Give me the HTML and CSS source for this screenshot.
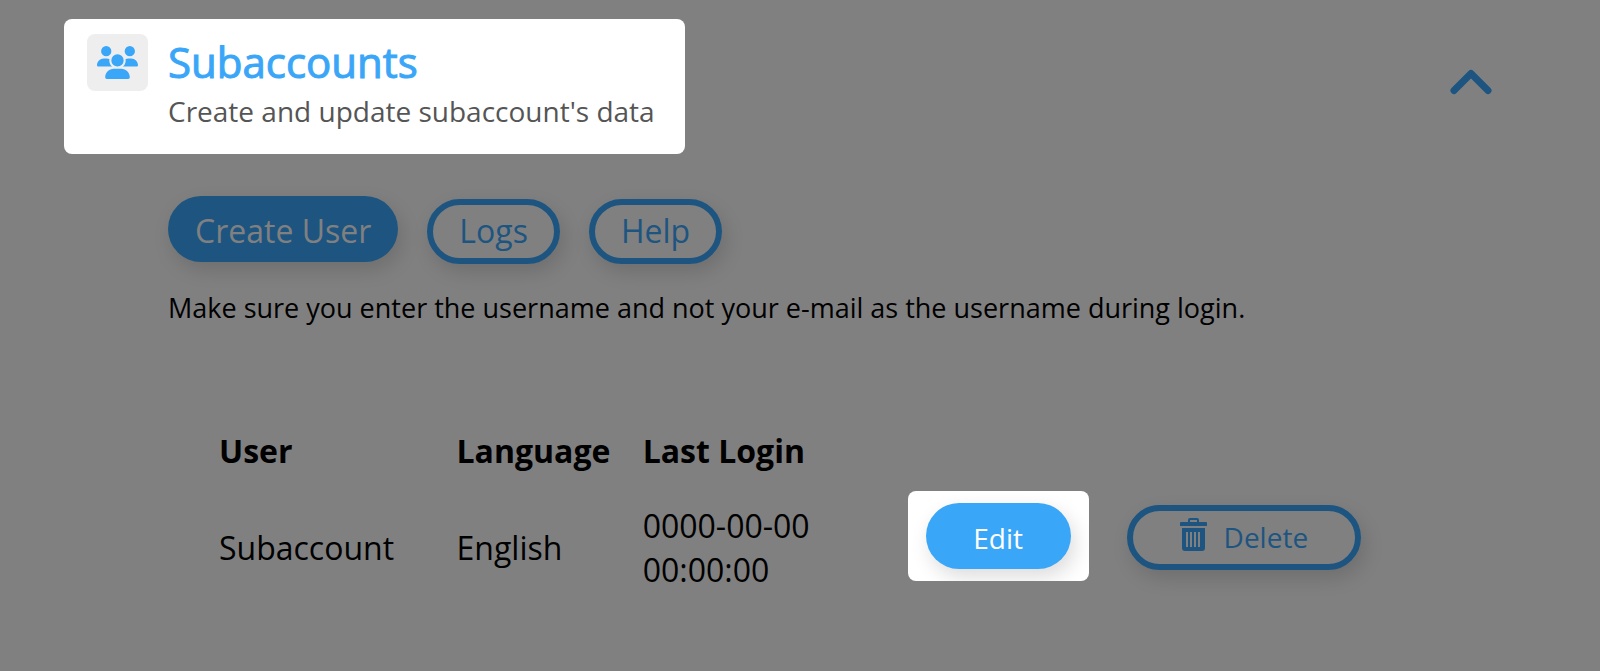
FILE: index.html
```html
<!DOCTYPE html>
<html lang="en">
<head>
<meta charset="utf-8">
<title>Subaccounts</title>
<link rel="stylesheet" href="styles.css">
</head>
<body>
<main class="panel">
  <header class="panel-header">
    <div class="intro">
      <span class="intro-icon">
        <svg viewBox="0 0 640 512" width="41" height="33" aria-hidden="true"><path fill="currentColor" d="M144 0a80 80 0 1 1 0 160A80 80 0 1 1 144 0zM512 0a80 80 0 1 1 0 160A80 80 0 1 1 512 0zM0 298.700C0 239.800 47.800 192 106.700 192h42.700c15.900 0 31 3.500 44.600 9.700c-1.300 7.200-1.900 14.700-1.900 22.300c0 38.200 16.800 72.500 43.300 96H21.300C9.600 320 0 310.400 0 298.700zM405.300 320h-.7c26.600-23.500 43.300-57.800 43.300-96c0-7.600-.7-15-1.900-22.300c13.600-6.300 28.700-9.700 44.600-9.700h42.700C592.200 192 640 239.800 640 298.700c0 11.800-9.600 21.300-21.300 21.300H405.300zM224 224a96 96 0 1 1 192 0a96 96 0 1 1-192 0zM128 485.300C128 411.700 187.700 352 261.300 352h117.400C452.300 352 512 411.700 512 485.300c0 14.700-11.900 26.700-26.700 26.700H154.700c-14.700 0-26.700-11.900-26.700-26.700z"/></svg>
      </span>
      <div class="intro-text">
        <h1 class="title">Subaccounts</h1>
        <p class="subtitle">Create and update subaccount's data</p>
      </div>
    </div>
    <button class="collapse" type="button" aria-label="Collapse" aria-expanded="true">
      <svg viewBox="0 0 42 26" width="42" height="26" aria-hidden="true"><path d="M4 21.500 21 4.500 38 21.500" fill="none" stroke="currentColor" stroke-width="7" stroke-linecap="round" stroke-linejoin="round"/></svg>
    </button>
  </header>
  <section class="content">
    <div class="actions">
      <button class="btn btn-filled btn-dim" type="button">Create User</button>
      <button class="btn btn-outline" type="button">Logs</button>
      <button class="btn btn-outline" type="button">Help</button>
    </div>
    <p class="note">Make sure you enter the username and not your e-mail as the username during login.</p>
    <table class="users">
      <colgroup>
        <col class="col-user"><col class="col-language"><col class="col-login"><col class="col-edit"><col class="col-delete">
      </colgroup>
      <thead>
        <tr><th scope="col">User</th><th scope="col">Language</th><th scope="col">Last Login</th><td></td><td></td></tr>
      </thead>
      <tbody>
        <tr>
          <td>Subaccount</td>
          <td>English</td>
          <td>0000-00-00 00:00:00</td>
          <td class="action"><div class="spotlight"><button class="btn btn-filled btn-edit" type="button">Edit</button></div></td>
          <td class="action">
            <button class="btn btn-outline btn-delete" type="button">
              <svg class="trash" viewBox="0 0 27 33" width="27" height="33" aria-hidden="true"><path fill="currentColor" fill-rule="evenodd" d="M8 4V2q0-2 2-2h7q2 0 2 2v2h7q1 0 1 1v3H0V5q0-1 1-1zM10 2v2h7V2zM2 10h23v20q0 3-3 3H5q-3 0-3-3zM6 14v15h2V14zM10 14v15h2V14zM14 14v15h2V14zM18 14v15h2V14z"/></svg>
              Delete
            </button>
          </td>
        </tr>
      </tbody>
    </table>
  </section>
</main>
</body>
</html>
```
FILE: styles.css
```css
* { box-sizing: border-box; }

body {
  margin: 0;
  background: #808080;
  color: #000;
  font-family: "Open Sans", "Noto Sans", sans-serif;
}

.panel { padding: 19px 108px 40px 64px; }

.panel-header {
  display: flex;
  justify-content: space-between;
  align-items: center;
}

.intro {
  display: flex;
  align-items: flex-start;
  gap: 20px;
  padding: 15px 30px 22px 23px;
  border-radius: 8px;
  background: #fff;
}

.intro-icon {
  display: flex;
  align-items: center;
  justify-content: center;
  width: 61px;
  height: 57px;
  border-radius: 8px;
  background: #eee;
  color: #3aa6f8;
}

.title {
  margin: 0;
  color: #3aa6f8;
  font-size: 42px;
  font-weight: 500;
  line-height: 56px;
  -webkit-text-stroke: 1px #3aa6f8;
}

.subtitle {
  margin: 0;
  color: #555;
  font-size: 28px;
  line-height: 42px;
}

.collapse {
  display: flex;
  margin-bottom: 10px;
  padding: 0;
  border: 0;
  background: none;
  color: #1d5580;
}

.content { padding: 42px 0 0 104px; }

.actions {
  display: flex;
  align-items: flex-start;
  gap: 29px;
}

.btn {
  border: 0;
  border-radius: 33px;
  font-family: inherit;
  font-size: 32px;
  line-height: 44px;
  box-shadow: 4px 8px 20px rgba(0, 0, 0, 0.14);
}

.btn-filled {
  height: 66px;
  padding: 4px 27px 0;
  background: #3aa6f8;
  color: #fff;
}

.btn-dim {
  background: #1d5580;
  color: #808080;
}

.btn-outline {
  height: 65px;
  margin-top: 3px;
  padding: 0 26px 2px;
  border: 6px solid #1d5580;
  background: transparent;
  color: #1d5580;
}

.note {
  margin: 24px 0 0;
  font-size: 27px;
  line-height: 40px;
}

.users {
  width: calc(100% - 182px);
  margin: 100px 0 0 51px;
  border-collapse: collapse;
  table-layout: fixed;
  font-size: 32px;
  line-height: 44px;
}

.users th,
.users td {
  padding: 0;
  text-align: left;
  vertical-align: middle;
}

.users th { height: 46px; }
.users tbody td { height: 148px; }
.users tbody .action { padding-bottom: 25px; }

.col-user { width: 20.8%; }
.col-language { width: 16.3%; }
.col-login { width: 23.2%; }
.col-edit { width: 19.2%; }
.col-delete { width: 20.5%; }

.spotlight {
  display: flex;
  width: 181px;
  padding: 12px 18px;
  border-radius: 8px;
  background: #fff;
  overflow: hidden;
}

.btn-edit {
  width: 145px;
  font-size: 28px;
}

.btn-delete {
  display: flex;
  align-items: center;
  justify-content: center;
  gap: 17px;
  width: 234px;
  padding-bottom: 0;
  font-size: 28px;
}

.trash { margin-bottom: 6px; }
```
